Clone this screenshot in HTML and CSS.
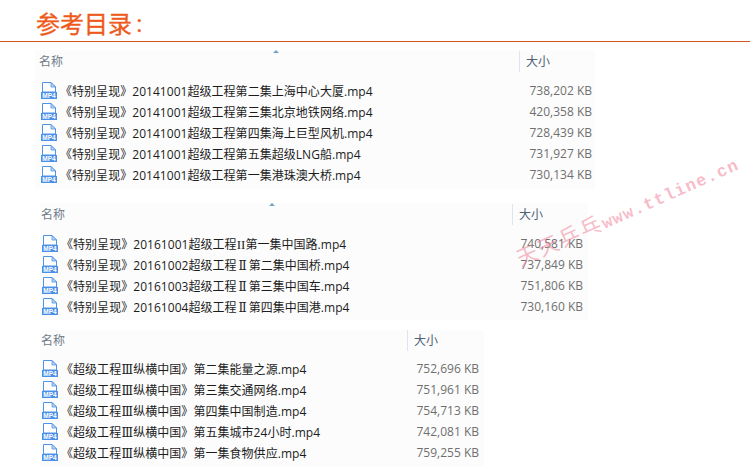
FILE: index.html
```html
<!DOCTYPE html>
<html lang="zh-CN">
<head>
<meta charset="utf-8">
<title>参考目录</title>
<link rel="stylesheet" href="styles.css">
</head>
<body>
<svg class="defs" width="0" height="0" aria-hidden="true">
  <symbol id="page" viewBox="0 0 16 17">
    <path d="M1.5 .5H10L14.5 5V10H1.5Z" fill="#fff" stroke="#4f93e6"/>
    <path d="M10 .5V5H14.5Z" fill="#bcd6f5" stroke="#4f93e6" stroke-width=".8"/>
    <rect x="0" y="10" width="16" height="7" fill="#4a8fe8"/>
  </symbol>
</svg>
<header class="title-bar"><h1 class="title">参考目录<span class="colon">：</span></h1></header>
<main class="lists">
  <section class="panel panel-a">
    <span class="sort-arrow"></span>
    <div class="head"><span class="col-name">名称</span><span class="col-size">大小</span></div>
    <ul class="rows">
      <li class="row"><span class="ico"><svg width="16" height="17"><use href="#page"/></svg><b class="ico-label">MP4</b></span><span class="fname">《特别呈现》20141001超级工程第二集上海中心大厦.mp4</span><span class="fsize">738,202 KB</span></li>
      <li class="row"><span class="ico"><svg width="16" height="17"><use href="#page"/></svg><b class="ico-label">MP4</b></span><span class="fname">《特别呈现》20141001超级工程第三集北京地铁网络.mp4</span><span class="fsize">420,358 KB</span></li>
      <li class="row"><span class="ico"><svg width="16" height="17"><use href="#page"/></svg><b class="ico-label">MP4</b></span><span class="fname">《特别呈现》20141001超级工程第四集海上巨型风机.mp4</span><span class="fsize">728,439 KB</span></li>
      <li class="row"><span class="ico"><svg width="16" height="17"><use href="#page"/></svg><b class="ico-label">MP4</b></span><span class="fname">《特别呈现》20141001超级工程第五集超级LNG船.mp4</span><span class="fsize">731,927 KB</span></li>
      <li class="row"><span class="ico"><svg width="16" height="17"><use href="#page"/></svg><b class="ico-label">MP4</b></span><span class="fname">《特别呈现》20141001超级工程第一集港珠澳大桥.mp4</span><span class="fsize">730,134 KB</span></li>
    </ul>
  </section>
  <section class="panel panel-b">
    <span class="sort-arrow"></span>
    <div class="head"><span class="col-name">名称</span><span class="col-size">大小</span></div>
    <ul class="rows">
      <li class="row"><span class="ico"><svg width="16" height="17"><use href="#page"/></svg><b class="ico-label">MP4</b></span><span class="fname">《特别呈现》20161001超级工程<span class="roman-ascii">II</span>第一集中国路.mp4</span><span class="fsize">740,581 KB</span></li>
      <li class="row"><span class="ico"><svg width="16" height="17"><use href="#page"/></svg><b class="ico-label">MP4</b></span><span class="fname">《特别呈现》20161002超级工程<span class="roman">Ⅱ</span>第二集中国桥.mp4</span><span class="fsize">737,849 KB</span></li>
      <li class="row"><span class="ico"><svg width="16" height="17"><use href="#page"/></svg><b class="ico-label">MP4</b></span><span class="fname">《特别呈现》20161003超级工程<span class="roman">Ⅱ</span>第三集中国车.mp4</span><span class="fsize">751,806 KB</span></li>
      <li class="row"><span class="ico"><svg width="16" height="17"><use href="#page"/></svg><b class="ico-label">MP4</b></span><span class="fname">《特别呈现》20161004超级工程<span class="roman">Ⅱ</span>第四集中国港.mp4</span><span class="fsize">730,160 KB</span></li>
    </ul>
  </section>
  <section class="panel panel-c">
    <div class="head"><span class="col-name">名称</span><span class="col-size">大小</span></div>
    <ul class="rows">
      <li class="row"><span class="ico"><svg width="16" height="17"><use href="#page"/></svg><b class="ico-label">MP4</b></span><span class="fname">《超级工程<span class="roman">Ⅲ</span>纵横中国》第二集能量之源.mp4</span><span class="fsize">752,696 KB</span></li>
      <li class="row"><span class="ico"><svg width="16" height="17"><use href="#page"/></svg><b class="ico-label">MP4</b></span><span class="fname">《超级工程<span class="roman">Ⅲ</span>纵横中国》第三集交通网络.mp4</span><span class="fsize">751,961 KB</span></li>
      <li class="row"><span class="ico"><svg width="16" height="17"><use href="#page"/></svg><b class="ico-label">MP4</b></span><span class="fname">《超级工程<span class="roman">Ⅲ</span>纵横中国》第四集中国制造.mp4</span><span class="fsize">754,713 KB</span></li>
      <li class="row"><span class="ico"><svg width="16" height="17"><use href="#page"/></svg><b class="ico-label">MP4</b></span><span class="fname">《超级工程<span class="roman">Ⅲ</span>纵横中国》第五集城市24小时.mp4</span><span class="fsize">742,081 KB</span></li>
      <li class="row"><span class="ico"><svg width="16" height="17"><use href="#page"/></svg><b class="ico-label">MP4</b></span><span class="fname">《超级工程<span class="roman">Ⅲ</span>纵横中国》第一集食物供应.mp4</span><span class="fsize">759,255 KB</span></li>
    </ul>
  </section>
</main>
<div class="watermark">天天乒乓<span class="wm-latin">www.ttline.cn</span></div>
</body>
</html>
```
FILE: styles.css
```css
* { box-sizing: border-box; }
html, body { margin: 0; padding: 0; }
body {
  position: relative;
  width: 750px;
  height: 466px;
  overflow: hidden;
  background: #fff;
  font-family: "Open Sans", "Noto Sans CJK SC", sans-serif;
  font-size: 12px;
  color: #1c1c1c;
}
.defs { position: absolute; }
.title-bar {
  height: 42px;
  padding: 8px 0 0 36px;
  border-bottom: 1px solid #d9531e;
}
.title {
  margin: 0;
  font: 400 24px/30px "Noto Sans CJK SC", serif;
  -webkit-text-stroke: .35px #ee5a1c;
  color: #ee5a1c;
}
.colon { display: inline-block; transform: translate(0, 1px) scale(.8); }
.lists { display: flex; flex-direction: column; align-items: flex-start; }
.panel { position: relative; background: #fcfcfc; }
.panel-a { margin: 8px 0 0 35px; width: 560px; height: 139px; padding: 1px 3px 0 4px; --sep: 484px; }
.panel-b { margin: 14px 0 0 40px; width: 548px; height: 117px; padding: 1px 5px 0 1px; --sep: 472px; }
.panel-c { margin: 10px 0 0 40px; width: 444px; height: 136px; padding: 0 5px 0 1px; --sep: 367px; }
.head {
  display: grid;
  grid-template-columns: calc(var(--sep) - 4px) 1fr;
  height: 21px;
  line-height: 21px;
}
.panel-b .head, .panel-c .head { grid-template-columns: calc(var(--sep) - 1px) 1fr; }
.col-name { color: #6f7b88; }
.col-size {
  border-left: 1px solid #dde6f0;
  padding-left: 6px;
  color: #4d6074;
}
.rows { list-style: none; margin: 8px 0 0; padding: 0; }
.panel-c .rows { margin-top: 7px; }
.row {
  display: grid;
  grid-template-columns: 2px 16px 3px 1fr 70px;
  height: 21px;
  align-items: center;
}
.panel-b .row, .panel-c .row { grid-template-columns: 1px 16px 3px 1fr 70px; }
.ico { grid-column: 2; position: relative; display: block; width: 16px; height: 17px; }
.ico svg { display: block; }
.ico-label {
  position: absolute;
  left: 0;
  bottom: 0;
  width: 16px;
  font: 700 6.5px/7px "Liberation Sans", sans-serif;
  color: #fff;
  text-align: center;
}
.fname { grid-column: 4; white-space: nowrap; letter-spacing: .04px; }
.roman { display: inline-block; width: 12px; text-align: center; font-family: "DejaVu Serif", serif; }
.roman-ascii { font-family: "Liberation Serif", serif; font-size: 13px; }
.fsize { grid-column: 5; text-align: right; color: #6f6f6f; white-space: nowrap; }
.sort-arrow {
  position: absolute;
  top: 0;
  width: 0;
  height: 0;
  border: 3px solid transparent;
  border-top: 0;
  border-bottom-color: #6fa6c8;
}
.panel-a .sort-arrow { left: 238px; }
.panel-b .sort-arrow { left: 229px; }
.watermark {
  position: absolute;
  left: 518px;
  top: 246px;
  transform: rotate(-24deg);
  transform-origin: 0 50%;
  white-space: nowrap;
  font: 21px/24px "Noto Sans CJK SC", sans-serif;
  color: rgba(240, 130, 155, .55);
  letter-spacing: 2px;
}
.wm-latin { font-family: "Liberation Mono", monospace; font-size: 17px; font-weight: 700; letter-spacing: 1.2px; }
```
